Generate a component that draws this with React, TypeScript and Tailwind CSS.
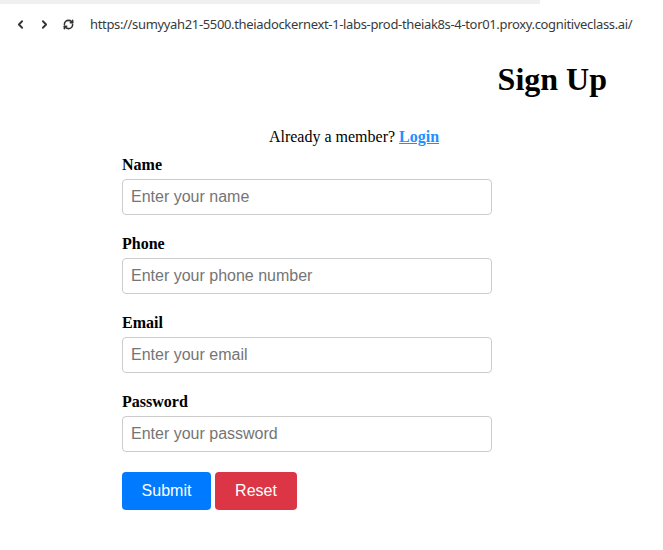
import {ChevronLeft, ChevronRight, RefreshCw} from "lucide-react";

const fields = [
    {label: "Name", type: "text", placeholder: "Enter your name"},
    {label: "Phone", type: "tel", placeholder: "Enter your phone number"},
    {label: "Email", type: "email", placeholder: "Enter your email"},
    {label: "Password", type: "password", placeholder: "Enter your password"},
];

export default function App() {
    return <div className="w-[663px] h-[550px] bg-white overflow-hidden">
        <div className="h-[4px] w-[540px] bg-[#f0f0f0]"></div>
        <nav className="h-[41px] flex items-center text-[#333]">
            <ChevronLeft size={13} strokeWidth={3.4} className="ml-[14px]"/>
            <ChevronRight size={13} strokeWidth={3.4} className="ml-[11px]"/>
            <RefreshCw size={11} strokeWidth={3.4} className="ml-[12px]"/>
            <span className="ml-[16px] text-[13px] font-['Noto_Sans',sans-serif] text-[#3a3a3a] tracking-[-0.34px] whitespace-nowrap">
                https://sumyyah21-5500.theiadockernext-1-labs-prod-theiak8s-4-tor01.proxy.cognitiveclass.ai/
            </span>
        </nav>
        <main className="font-['Liberation_Serif',serif] text-black">
            <h1 className="mt-[16px] text-[32px] leading-[37px] font-bold text-right pr-[56px]">Sign Up</h1>
            <form className="ml-[122px] w-[464px]" onSubmit={e => e.preventDefault()}>
                <p className="mt-[30px] text-[16px] leading-[18px] text-center">
                    Already a member? <a href="#" className="text-[#1e90ff] font-bold underline">Login</a>
                </p>
                {fields.map((f, i) => (
                    <div key={f.label} className={i === 0 ? "mt-[10px]" : "mt-[20px]"}>
                        <label className="block text-[16px] leading-[18px] font-bold">{f.label}</label>
                        <input
                            type={f.type}
                            placeholder={f.placeholder}
                            className="mt-[5px] block w-[370px] h-[36px] px-[8px] border border-[#ccc] rounded-[4px] text-[16px] font-['Liberation_Sans',sans-serif] placeholder:text-[#757575] outline-none"
                        />
                    </div>
                ))}
                <div className="mt-[20px] flex gap-[4px] font-['Liberation_Sans',sans-serif]">
                    <button type="submit" className="h-[38px] w-[89px] bg-[#007bff] text-white text-[16px] rounded-[4px]">Submit</button>
                    <button type="reset" className="h-[38px] w-[82px] bg-[#dc3545] text-white text-[16px] rounded-[4px]">Reset</button>
                </div>
            </form>
        </main>
    </div>
}
